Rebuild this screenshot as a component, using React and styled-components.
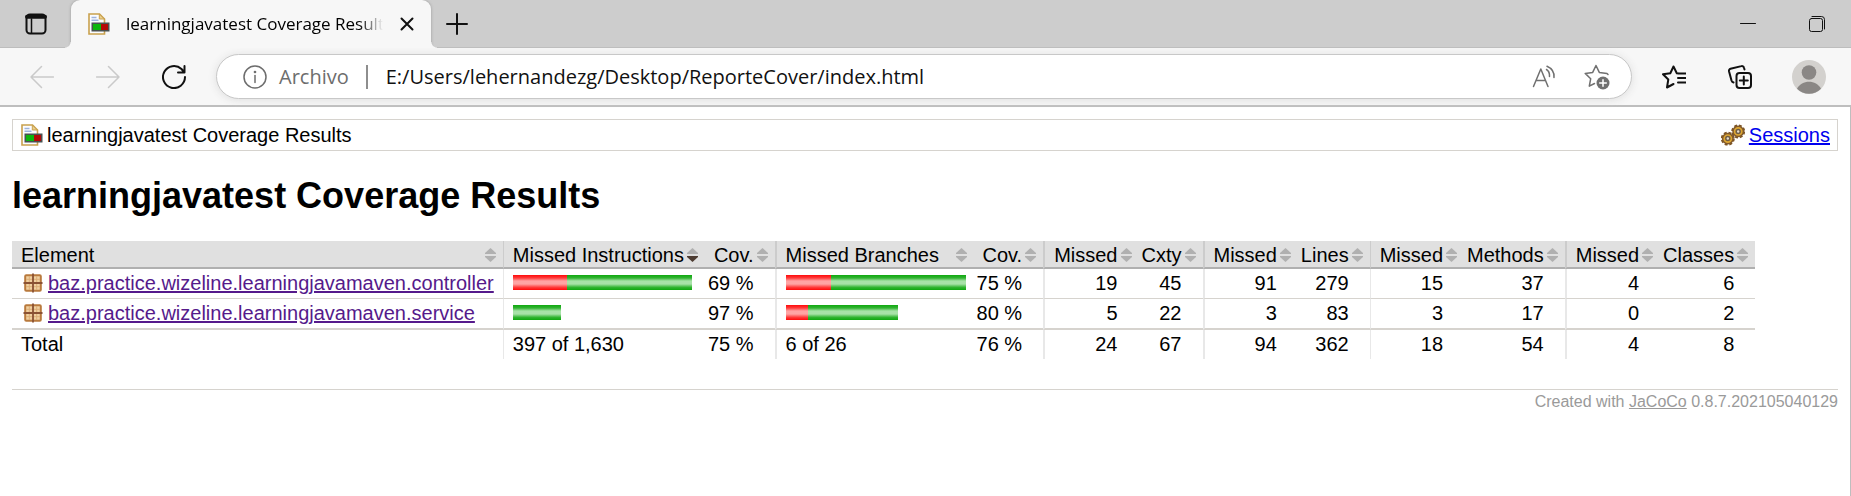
import React from "react";
import styled, { createGlobalStyle, css } from "styled-components";

const GlobalStyle = createGlobalStyle`
  * { box-sizing: border-box; }
  html { background: #fff; }
  body { margin: 0; font-family: "Liberation Sans", Arial, sans-serif; font-size: 20px; line-height: 24px; color: #000; }
  #root { display: flex; flex-direction: column; min-height: 100vh; }
`;

const uiFont = css`font-family: "Open Sans", "Noto Sans", sans-serif;`;

/* ---------- browser chrome ---------- */

const TabStrip = styled.header`
  display: flex;
  height: 48px;
  background: #cdcdcd;
  box-shadow: inset 0 -1px 0 #bdbdbd;
`;

const PlainButton = styled.button`
  display: flex;
  align-items: center;
  justify-content: center;
  flex: none;
  width: ${(p) => p.$width}px;
  padding: 0;
  border: 0;
  background: none;
  color: ${(p) => p.$color || "#111"};
`;

const Tab = styled.div`
  position: relative;
  display: flex;
  align-items: center;
  width: 360px;
  padding-left: 15px;
  background: #f7f7f7;
  border-radius: 9px 9px 0 0;
  box-shadow: 0 0 3px #999;
  clip-path: inset(0 -6px 0 -6px);
  &::before, &::after {
    content: "";
    position: absolute;
    bottom: 0;
    width: 6px;
    height: 6px;
  }
  &::before { left: -6px; background: radial-gradient(circle at 0 0, transparent 5px, #f7f7f7 6px); }
  &::after { right: -6px; background: radial-gradient(circle at 100% 0, transparent 5px, #f7f7f7 6px); }
`;

const TabTitle = styled.span`
  ${uiFont}
  flex: 1;
  margin-left: 16px;
  overflow: hidden;
  white-space: nowrap;
  font-size: 17px;
  mask-image: linear-gradient(to right, #000 calc(100% - 24px), transparent);
`;

const Spacer = styled.div`flex: 1;`;

const Toolbar = styled.nav`
  display: flex;
  align-items: center;
  height: 59px;
  padding: 0 6px 0 9px;
  background: #f7f7f7;
  border-bottom: 2px solid #bebebe;
`;

const AddressBar = styled.label`
  ${uiFont}
  display: flex;
  flex: 1;
  align-items: center;
  height: 45px;
  margin: 0 9px;
  padding: 0 8px 0 26px;
  background: #fff;
  border: 1px solid #c8c8c8;
  border-radius: 23px;
  box-shadow: 0 1px 8px #dedede;
  font-size: 20px;
  color: #6d6d6d;
`;

const Scheme = styled.span`
  margin-left: 12px;
  padding-right: 17px;
  border-right: 2px solid #8e8e8e;
`;

const UrlInput = styled.input`
  flex: 1;
  min-width: 0;
  margin-left: 18px;
  padding: 0;
  border: 0;
  outline: 0;
  background: none;
  font: inherit;
  color: #111;
`;

/* ---------- report page ---------- */

const Page = styled.main`
  flex: 1;
  padding: 12px 12px 0;
  border-right: 1px solid #bebebe;
`;

const Breadcrumb = styled.div`
  display: flex;
  align-items: center;
  justify-content: space-between;
  height: 32px;
  padding: 0 7px 0 6px;
  border: 1px solid #d6d3ce;
`;

const Crumb = styled.span`
  display: flex;
  align-items: center;
  gap: 4px;
`;

const Link = styled.a`
  color: ${(p) => p.$color};
`;

const Title = styled.h1`
  margin: 24px 0;
  font-size: 36px;
  line-height: 42px;
`;

const Table = styled.table`
  border-collapse: separate;
  border-spacing: 0;
  white-space: nowrap;
  tbody td { border-bottom: 1px solid #d6d3ce; }
  tbody tr:last-child td { border-bottom-width: 2px; }
`;

const isNumeric = (kind) => kind === "first" || kind === "second";
const padLeft = (p) => (p.$kind === "second" ? 3 : 9);

const HeadCell = styled.th`
  height: 28px;
  padding: 2px 7px 0 ${padLeft}px;
  background: #e0e0e0;
  border-left: ${(p) => p.$rule}px solid #cccccc;
  border-bottom: 2px solid #b0b0b0;
  font-weight: normal;
`;

const SortButton = styled.button`
  display: flex;
  align-items: center;
  justify-content: ${(p) => (isNumeric(p.$kind) ? "flex-end" : "space-between")};
  gap: 3px;
  width: 100%;
  padding: 0;
  border: 0;
  background: none;
  font: inherit;
  color: inherit;
`;

const cellPadRight = { name: 9, bar: 8, first: 21, second: 21 };

const Cell = styled.td`
  height: ${(p) => p.$height}px;
  padding: 0 ${(p) => cellPadRight[p.$kind]}px 2px ${padLeft}px;
  border-left: ${(p) => p.$rule}px solid #e8e8e8;
  text-align: ${(p) => (isNumeric(p.$kind) ? "right" : "left")};
`;

const Package = styled.span`
  display: flex;
  align-items: center;
  gap: 3px;
`;

const BarTrack = styled.div`
  display: flex;
  width: 180px;
`;

const barColors = {
  red: "#ff0a0a, #ff3c3c 20%, #ffa4a4 40%, #ffa4a4 60%, #ff3c3c 82%, #ff0a0a",
  green: "#0fa80f, #32b432 20%, #a8e2a8 40%, #a8e2a8 60%, #32b432 82%, #0fa80f",
};

const Bar = styled.span`
  height: 15px;
  background: linear-gradient(${(p) => barColors[p.$tone]});
`;

const Footer = styled.footer`
  display: flex;
  justify-content: flex-end;
  margin-top: 30px;
  border-top: 1px solid #d6d3ce;
  font-size: 16px;
  color: #9a9a9a;
`;

/* ---------- icons ---------- */

const Line = ({ size = 24, width = 2, children }) => (
  <svg width={size} height={size} viewBox={`0 0 ${size} ${size}`} fill="none" stroke="currentColor" strokeWidth={width} strokeLinecap="round" strokeLinejoin="round" aria-hidden="true">
    {children}
  </svg>
);

const ReportIcon = () => (
  <svg width="24" height="24" viewBox="0 0 24 24" aria-hidden="true">
    <path d="M3 2h10.500l5 5v15H3z" fill="#fbfcff" stroke="#c9a14e" strokeWidth="1.600" />
    <path d="M13.300 2v5h5z" fill="#e9cf8e" stroke="#c9a14e" strokeWidth="1" />
    <path d="M5.500 5.500h5M5.500 8.200h7" stroke="#9db2dc" strokeWidth="1.400" />
    <rect x="5.500" y="10.500" width="18" height="9" fill="#4a5150" />
    <rect x="7" y="12" width="8" height="6" fill="#0db50d" />
    <rect x="15" y="12" width="7" height="6" fill="#b40808" />
  </svg>
);

const PackageIcon = () => (
  <svg width="24" height="24" viewBox="0 0 24 24" aria-hidden="true">
    <rect x="4.200" y="4.200" width="15.600" height="15.600" rx="1" fill="#f0d1a1" stroke="#b97a3d" strokeWidth="2" />
    <path d="M8.300 5v14M15.700 5v14M5 8.300h14M5 15.700h14" stroke="#dcae78" strokeWidth="1" />
    <path d="M12 2.500v19M2.500 12h19" stroke="#8a5234" strokeWidth="1.800" />
  </svg>
);

const Gear = ({ x, y }) => (
  <g transform={`translate(${x} ${y})`}>
    <circle r="6" fill="none" stroke="#7c5426" strokeWidth="2" strokeDasharray="2.900 1.812" />
    <circle r="5.200" fill="#dda632" stroke="#80582a" strokeWidth="1.500" />
    <circle r="2" fill="#e6dccb" stroke="#6f5c45" strokeWidth="1.500" />
  </g>
);

const SessionsIcon = () => (
  <svg width="24" height="24" viewBox="0 0 24 24" aria-hidden="true">
    <Gear x={6.8} y={15.6} />
    <Gear x={17.2} y={8.4} />
  </svg>
);

const SortIcon = ({ active }) => (
  <svg width="11" height="14" viewBox="0 0 11 14" aria-hidden="true">
    <path d="M5.500 0L11 5v1H0V5z" fill="#b0b0b0" />
    <path d="M0 8h11v1l-5.500 5L0 9z" fill={active ? "#4d3c32" : "#b0b0b0"} />
  </svg>
);

const WorkspaceIcon = () => (
  <Line size={22}>
    <rect x="1.500" y="1.500" width="19" height="19" rx="3.500" />
    <path d="M2 3.800h18" strokeWidth="4" />
    <path d="M6.500 6v14" strokeWidth="1.500" />
  </Line>
);
const CloseIcon = () => <Line size={14}><path d="M1.500 1.500l11 11M12.500 1.500l-11 11" /></Line>;
const PlusIcon = () => <Line size={22}><path d="M11 1v20M1 11h20" /></Line>;
const MinimizeIcon = () => <Line size={16} width={1}><path d="M.5 7.500h15" /></Line>;
const RestoreIcon = () => (
  <Line size={16} width={1}>
    <rect x=".5" y="2.500" width="13" height="13" rx="2" />
    <path d="M3 .5h9.500a3 3 0 0 1 3 3V13" />
  </Line>
);
const BackIcon = () => <Line width={1.5}><path d="M23.500 12H1M11.500 1.500L1 12l10.500 10.500" /></Line>;
const ForwardIcon = () => <Line width={1.5}><path d="M.5 12H23M12.500 1.500L23 12 12.500 22.500" /></Line>;
const RefreshIcon = () => <Line><path d="M23 12A11 11 0 1 1 19.500 4L22 7M22.500 1v6.500H16" /></Line>;
const InfoIcon = () => (
  <Line width={1.5}>
    <circle cx="12" cy="12" r="11" />
    <path d="M12 10.500v7" />
    <circle cx="12" cy="7" r=".6" />
  </Line>
);
const ReadAloudIcon = () => (
  <Line width={1.5}>
    <path d="M1.500 21.500L8.800 4l7.200 17.500M4 15.500h9.500M14.500 4.500c2 1.300 3.200 4 3 7M15 1.200c4.500 2 7.500 6 7 11.300" />
  </Line>
);
const AddFavoriteIcon = () => (
  <Line size={26} width={1.5}>
    <path d="M24 10.500l-1-1-7.700-1.100L12 1.500 8.700 8.400 1.200 9.400l5.500 5.300-1.400 7.500 5.200-2.700" />
    <circle cx="19" cy="19" r="6.500" fill="#707070" stroke="none" />
    <path d="M19 15.700v6.600M15.700 19h6.600" stroke="#fff" />
  </Line>
);
const FavoritesIcon = () => (
  <Line>
    <path d="M16.500 8.500l-1.700-.2L11.500 1.500 8.300 8.200 1 9.300l5.300 5.200L5 22.500l6.500-3.500M17 8.500h6.500M16 13h7.500M16 17.500h7.500" />
  </Line>
);
const CollectionsIcon = () => (
  <Line>
    <rect x="8.500" y="8" width="14.500" height="15" rx="3" />
    <path d="M15.800 11.500v8M11.800 15.500h8M16.500 4.500l-.6-2a2 2 0 0 0-2.500-1.400L2.500 3.800A2 2 0 0 0 1 6.200l2.500 9.300a3 3 0 0 0 2 2" />
  </Line>
);
const AvatarIcon = () => (
  <svg width="34" height="34" viewBox="0 0 34 34" aria-hidden="true">
    <circle cx="17" cy="17" r="17" fill="#d3d1ce" />
    <circle cx="17" cy="12.500" r="7.300" fill="#8a8785" />
    <path d="M5 28.800c2.500-4.800 7-7 12-7s9.500 2.200 12 7A17 17 0 0 1 5 28.800z" fill="#8a8785" />
  </svg>
);

/* ---------- data ---------- */

const columns = [
  { label: "Element", kind: "name", rule: 0 },
  { label: "Missed Instructions", kind: "bar", rule: 1, active: true },
  { label: "Cov.", kind: "second", rule: 0 },
  { label: "Missed Branches", kind: "bar", rule: 2 },
  { label: "Cov.", kind: "second", rule: 0 },
  { label: "Missed", kind: "first", rule: 2 },
  { label: "Cxty", kind: "second", rule: 0 },
  { label: "Missed", kind: "first", rule: 2 },
  { label: "Lines", kind: "second", rule: 0 },
  { label: "Missed", kind: "first", rule: 1 },
  { label: "Methods", kind: "second", rule: 0 },
  { label: "Missed", kind: "first", rule: 2 },
  { label: "Classes", kind: "second", rule: 0 },
];

const rows = [
  ["baz.practice.wizeline.learningjavamaven.controller", [54, 125], "69 %", [45, 135], "75 %", 19, 45, 91, 279, 15, 37, 4, 6],
  ["baz.practice.wizeline.learningjavamaven.service", [0, 48], "97 %", [22, 90], "80 %", 5, 22, 3, 83, 3, 17, 0, 2],
];

const totals = ["Total", "397 of 1,630", "75 %", "6 of 26", "76 %", 24, 67, 94, 362, 18, 54, 4, 8];

const CoverageBar = ({ missed, covered }) => (
  <BarTrack>
    <Bar $tone="red" style={{ width: missed }} />
    <Bar $tone="green" style={{ width: covered }} />
  </BarTrack>
);

const renderValue = (value, kind) => {
  if (kind === "bar") return <CoverageBar missed={value[0]} covered={value[1]} />;
  if (kind === "name")
    return (
      <Package>
        <PackageIcon />
        <Link href="#" $color="#551a8b">{value}</Link>
      </Package>
    );
  return value;
};

export default function App() {
  return (
    <>
      <GlobalStyle />
      <TabStrip>
        <PlainButton $width={71} aria-label="Workspaces"><WorkspaceIcon /></PlainButton>
        <Tab>
          <ReportIcon />
          <TabTitle>learningjavatest Coverage Results</TabTitle>
          <PlainButton $width={48} aria-label="Close tab"><CloseIcon /></PlainButton>
        </Tab>
        <PlainButton $width={52} aria-label="New tab"><PlusIcon /></PlainButton>
        <Spacer />
        <PlainButton $width={69} aria-label="Minimize"><MinimizeIcon /></PlainButton>
        <PlainButton $width={69} aria-label="Restore"><RestoreIcon /></PlainButton>
      </TabStrip>
      <Toolbar>
        <PlainButton $width={66} $color="#cacaca" aria-label="Back"><BackIcon /></PlainButton>
        <PlainButton $width={66} $color="#cacaca" aria-label="Forward"><ForwardIcon /></PlainButton>
        <PlainButton $width={66} aria-label="Refresh"><RefreshIcon /></PlainButton>
        <AddressBar>
          <InfoIcon />
          <Scheme>Archivo</Scheme>
          <UrlInput aria-label="Address" defaultValue="E:/Users/lehernandezg/Desktop/ReporteCover/index.html" />
          <PlainButton $width={54} $color="#707070" aria-label="Read aloud"><ReadAloudIcon /></PlainButton>
          <PlainButton $width={52} $color="#707070" aria-label="Add to favorites"><AddFavoriteIcon /></PlainButton>
        </AddressBar>
        <PlainButton $width={66} aria-label="Favorites"><FavoritesIcon /></PlainButton>
        <PlainButton $width={66} aria-label="Collections"><CollectionsIcon /></PlainButton>
        <PlainButton $width={72} aria-label="Profile"><AvatarIcon /></PlainButton>
      </Toolbar>
      <Page>
        <Breadcrumb>
          <Crumb><ReportIcon />learningjavatest Coverage Results</Crumb>
          <Crumb><SessionsIcon /><Link href="#" $color="#0000ee">Sessions</Link></Crumb>
        </Breadcrumb>
        <Title>learningjavatest Coverage Results</Title>
        <Table>
          <thead>
            <tr>
              {columns.map((c, i) => (
                <HeadCell key={i} $kind={c.kind} $rule={c.rule} scope="col">
                  <SortButton $kind={c.kind}>{c.label}<SortIcon active={c.active} /></SortButton>
                </HeadCell>
              ))}
            </tr>
          </thead>
          <tbody>
            {rows.map((row, r) => (
              <tr key={r}>
                {row.map((value, i) => (
                  <Cell key={i} $kind={columns[i].kind} $rule={columns[i].rule} $height={r === rows.length - 1 ? 31 : 30}>
                    {renderValue(value, columns[i].kind)}
                  </Cell>
                ))}
              </tr>
            ))}
          </tbody>
          <tfoot>
            <tr>
              {totals.map((value, i) => (
                <Cell key={i} $kind={columns[i].kind} $rule={columns[i].rule} $height={29}>{value}</Cell>
              ))}
            </tr>
          </tfoot>
        </Table>
        <Footer>
          <span>Created with <Link href="#" $color="#9a9a9a">JaCoCo</Link> 0.8.7.202105040129</span>
        </Footer>
      </Page>
    </>
  );
}
